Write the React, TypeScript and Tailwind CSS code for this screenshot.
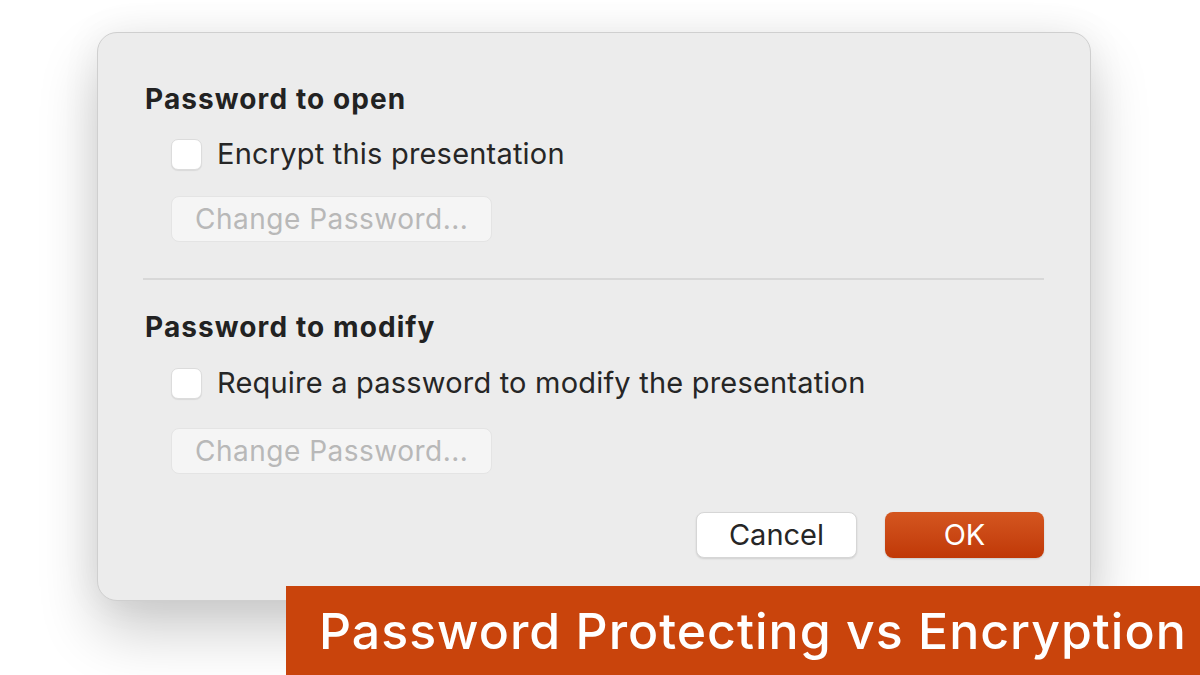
export default function App() {
  const ui = { fontFamily: "Inter, 'Liberation Sans', sans-serif" };
  return (
    <div className="relative w-[1200px] h-[675px] overflow-hidden bg-white" style={ui}>
      <div className="ml-[97px] mt-[32px] w-[994px] h-[569px] rounded-[20px] border border-[#cfcfcf] bg-[#ececec] shadow-[0_30px_60px_rgba(0,0,0,0.2),0_0_40px_rgba(0,0,0,0.06)] pl-[47px] pr-[46px] pt-[50px] flex flex-col">
        <h2 className="h-8 leading-8 text-[28px] font-bold tracking-[1.1px] text-[#222]">Password to open</h2>
        <label className="mt-[23px] ml-[26px] flex items-center gap-[15px] h-8">
          <span className="w-[31px] h-[31px] rounded-[7px] bg-white border border-[#dcdcdc] shadow-[0_1px_1px_rgba(0,0,0,0.08)]" />
          <span className="text-[29px] tracking-[0.2px] text-[#262626]">Encrypt this presentation</span>
        </label>
        <button className="mt-[26px] ml-[26px] w-[321px] h-[46px] rounded-[8px] bg-[#f5f5f5] border border-[#e4e4e4] text-[28px] tracking-[0.5px] text-[#b8b8b8] text-left pl-[23px]">
          Change Password...
        </button>
        <div className="mt-[36px] h-[2px] bg-[#d8d8d8] -ml-[2px]" />
        <h2 className="mt-[31px] h-8 leading-8 text-[28px] font-bold tracking-[1.1px] text-[#222]">Password to modify</h2>
        <label className="mt-[24px] ml-[26px] flex items-center gap-[15px] h-8">
          <span className="w-[31px] h-[31px] rounded-[7px] bg-white border border-[#dcdcdc] shadow-[0_1px_1px_rgba(0,0,0,0.08)]" />
          <span className="text-[29px] tracking-[0.2px] text-[#262626]">Require a password to modify the presentation</span>
        </label>
        <button className="mt-[29px] ml-[26px] w-[321px] h-[46px] rounded-[8px] bg-[#f5f5f5] border border-[#e4e4e4] text-[28px] tracking-[0.5px] text-[#b8b8b8] text-left pl-[23px]">
          Change Password...
        </button>
        <div className="mt-[38px] flex justify-end gap-[28px]">
          <button className="w-[161px] h-[46px] rounded-[8px] bg-white border border-[#d6d6d6] shadow-[0_1px_2px_rgba(0,0,0,0.12)] text-[29px] text-[#262626]">
            Cancel
          </button>
          <button className="w-[159px] h-[46px] rounded-[8px] bg-gradient-to-b from-[#d4561f] to-[#c03806] shadow-[0_1px_2px_rgba(0,0,0,0.15)] text-[29px] text-white">
            OK
          </button>
        </div>
      </div>
      <div className="absolute left-[286px] top-[586px] w-[914px] h-[89px] bg-[#c9440c] pl-[33px] flex items-center">
        <span className="text-[50px] font-medium text-white tracking-[1px] leading-none">
          Password Protecting vs Encryption
        </span>
      </div>
    </div>
  );
}
